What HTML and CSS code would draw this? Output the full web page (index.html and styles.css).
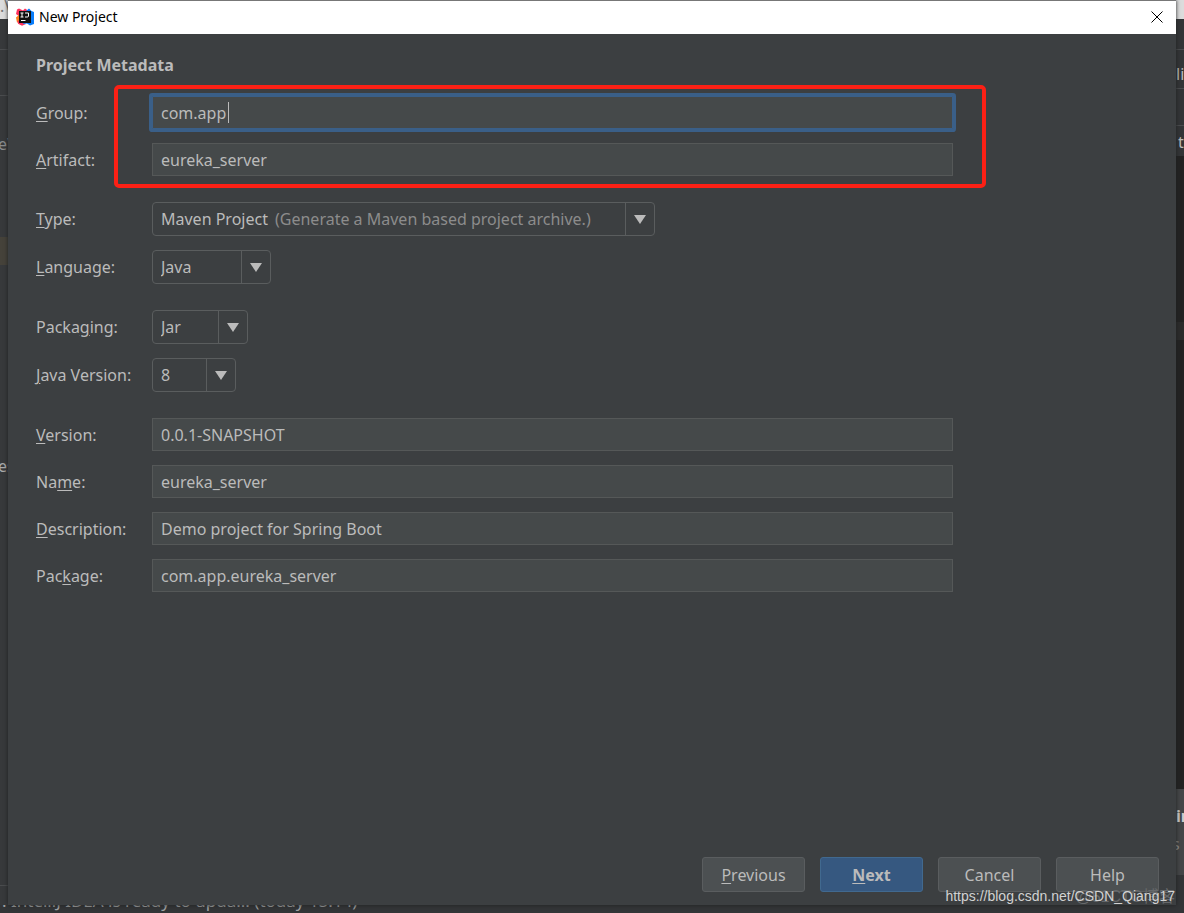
FILE: index.html
```html
<!DOCTYPE html>
<html lang="en">
<head>
<meta charset="utf-8">
<title>New Project</title>
<link rel="stylesheet" href="styles.css">
</head>
<body>
<div class="desktop">
  <aside class="edge edge-left" aria-hidden="true">
    <span class="scrap scrap-path">.\</span>
    <span class="rule rule-a"></span>
    <span class="rule rule-b"></span>
    <span class="scrap scrap-file">e\</span>
    <span class="highlight"></span>
    <span class="scrap scrap-es">es</span>
    <span class="rule rule-c"></span>
  </aside>

  <main class="dialog">
    <header class="titlebar">
      <svg class="logo" viewBox="0 0 18 18" aria-hidden="true">
        <path fill="#fe315d" d="M1 1.500 3 .5l4 2 2-2 3 2v3L4 9 0 6z"/>
        <path fill="#fc801d" d="M0 9.500 4 6l1 8-4 .5z"/>
        <path fill="#fe315d" d="M1.500 13 5 12l5 4-4 1.800-4-2z"/>
        <path fill="#087cfa" d="M10 3 13 .5 15.500 3 18 4v12l-4 1.500-3-2-4 .5z"/>
        <path fill="#111" d="M3 3h12v12H3z"/>
        <path fill="none" stroke="#fff" d="M4.500 5h3M6 5v4M4.500 9h3M9 5h3.500v3q0 1-1.200 1H9M5 12.500h4.500"/>
      </svg>
      <h1 class="title">New Project</h1>
      <button class="close" type="button" aria-label="Close">
        <svg viewBox="0 0 12 12" aria-hidden="true"><path d="M.5.5l11 11M11.500.5l-11 11"/></svg>
      </button>
    </header>

    <form class="content">
      <h2 class="heading">Project Metadata</h2>

      <div class="group">
        <label for="group"><u>G</u>roup:</label>
        <div class="focused"><input class="field" id="group" value="com.app"><span class="caret"></span></div>
        <label for="artifact"><u>A</u>rtifact:</label>
        <input class="field" id="artifact" value="eureka_server">
        <span class="marker"></span>
      </div>

      <div class="group">
        <label for="type"><u>T</u>ype:</label>
        <div class="combo combo-type">
          <select id="type"><option>Maven Project</option></select>
          <span class="hint">(Generate a Maven based project archive.)</span>
          <span class="arrow"></span>
        </div>
        <label for="language"><u>L</u>anguage:</label>
        <div class="combo combo-language">
          <select id="language"><option>Java</option></select>
          <span class="arrow"></span>
        </div>
      </div>

      <div class="group">
        <label for="packaging">Packa<u>g</u>ing:</label>
        <div class="combo combo-packaging">
          <select id="packaging"><option>Jar</option></select>
          <span class="arrow"></span>
        </div>
        <label for="java"><u>J</u>ava Version:</label>
        <div class="combo combo-java">
          <select id="java"><option>8</option></select>
          <span class="arrow"></span>
        </div>
      </div>

      <div class="group">
        <label for="version"><u>V</u>ersion:</label>
        <input class="field" id="version" value="0.0.1-SNAPSHOT">
        <label for="name">Na<u>m</u>e:</label>
        <input class="field" id="name" value="eureka_server">
        <label for="description"><u>D</u>escription:</label>
        <input class="field" id="description" value="Demo project for Spring Boot">
        <label for="package">Pac<u>k</u>age:</label>
        <input class="field" id="package" value="com.app.eureka_server">
      </div>
    </form>

    <footer class="actions">
      <button class="button" type="button"><u>P</u>revious</button>
      <button class="button button-primary" type="button"><u>N</u>ext</button>
      <button class="button" type="button">Cancel</button>
      <button class="button" type="button">Help</button>
    </footer>
  </main>

  <aside class="edge edge-right" aria-hidden="true">
    <span class="scrap scrap-li">li</span>
    <span class="rule rule-a"></span>
    <span class="rule rule-d"></span>
    <span class="rule rule-e"></span>
    <span class="scrap scrap-t">t</span>
    <span class="editor"></span>
    <span class="editor-line"></span>
    <span class="notice"></span>
    <span class="scrap scrap-in">in</span>
    <span class="scrap scrap-s">s</span>
  </aside>

  <div class="status">: IntelliJ IDEA is ready to upda... (today 15:14)</div>
  <span class="watermark watermark-site">@51CTO博客</span>
  <span class="watermark watermark-url">https://blog.csdn.net/CSDN_Qiang17</span>
</div>
</body>
</html>
```

FILE: styles.css
```css
* {
  box-sizing: border-box;
}

body {
  margin: 0;
  background: #333537;
  color: #bbbbbb;
  font: 16px/24px "Noto Sans", "Open Sans", sans-serif;
}

.desktop {
  position: relative;
  display: grid;
  grid-template: 1fr 8px / 8px 1fr 8px;
  height: 100vh;
  overflow: hidden;
}

/* Slivers of the window behind the dialog */
.edge {
  position: relative;
  overflow: hidden;
  background: linear-gradient(#dcdcdc 19px, #37393b 19px);
}

.edge-right {
  background: linear-gradient(#dcdcdc 19px, #333537 19px);
}

.scrap,
.rule,
.highlight,
.editor,
.editor-line,
.notice {
  position: absolute;
  left: 0;
}

.scrap {
  color: #8a8c8d;
  line-height: 20px;
}

.rule {
  width: 100%;
  height: 1px;
  background: #4a4c4e;
}

.rule-a { top: 49px; }
.rule-b { top: 95px; }
.rule-c { top: 885px; }
.rule-d { top: 88px; }
.rule-e { top: 125px; }
.scrap-path { top: -4px; color: #777777; }
.scrap-file { top: 134px; left: -2px; }
.scrap-es { top: 456px; left: -2px; color: #aaaaaa; }
.scrap-li { top: 64px; color: #bbbbbb; }
.scrap-t { top: 132px; left: 2px; color: #bbbbbb; }
.scrap-in { top: 806px; color: #cccccc; font-weight: 700; }
.scrap-s { top: 834px; left: -4px; }

.highlight {
  top: 237px;
  width: 100%;
  height: 28px;
  background: #45423a;
}

.editor {
  top: 156px;
  width: 100%;
  height: 633px;
  background: #232323;
}

.editor-line {
  top: 322px;
  width: 100%;
  height: 18px;
  background: #2b2b2b;
}

.notice {
  top: 789px;
  width: 100%;
  height: 86px;
  background: #444648;
}

.status {
  display: flex;
  grid-column: 1 / -1;
  align-items: flex-end;
  height: 8px;
  padding-left: 2px;
  overflow: hidden;
  background: #333537;
  color: #a0a2a3;
  font-size: 17px;
  line-height: 24px;
  white-space: nowrap;
}

/* Dialog */
.dialog {
  z-index: 1;
  display: flex;
  flex-direction: column;
  min-width: 0;
  border-top: 1px solid #777777;
  background: #3c3f41;
  box-shadow: 0 0 4px #1f2021;
}

.titlebar {
  display: flex;
  align-items: center;
  gap: 5px;
  height: 33px;
  padding: 0 13px 1px 8px;
  background: #ffffff;
}

.logo {
  width: 18px;
  height: 18px;
}

.title {
  flex: 1;
  margin: 0;
  color: #000000;
  font-size: 14px;
  font-weight: 400;
}

.close {
  display: flex;
  padding: 0;
  border: 0;
  background: none;
}

.close svg {
  width: 12px;
  height: 12px;
  fill: none;
  stroke: #000000;
}

.content {
  display: flex;
  flex: 1;
  flex-direction: column;
  gap: 26px;
  padding: 19px 223px 0 28px;
}

.heading {
  margin: 0 0 -7px;
  font-size: 16px;
  font-weight: 700;
}

.group {
  position: relative;
  display: grid;
  grid-template-columns: 116px 1fr;
  gap: 14px 0;
  align-items: center;
}

u {
  text-decoration-thickness: 1px;
  text-underline-offset: 2px;
}

.field {
  width: 100%;
  height: 33px;
  padding: 0 8px;
  border: 1px solid #555858;
  border-radius: 0;
  background: #45494a;
  color: #bbbbbb;
  font: inherit;
  outline: 0;
}

.focused {
  position: relative;
  display: flex;
}

.focused .field {
  border-color: #3a5f88;
  border-radius: 1px;
  box-shadow: 0 0 0 3px #3a5f88;
}

.caret {
  position: absolute;
  top: 6px;
  left: 76px;
  width: 1px;
  height: 21px;
  background: #bbbbbb;
}

.marker {
  position: absolute;
  inset: -11px -33px -12px 78px;
  border: 4px solid #fc2015;
  border-radius: 5px;
  pointer-events: none;
}

.combo {
  display: grid;
  grid-template-columns: 1fr 29px;
  align-items: center;
  height: 34px;
  border: 1px solid #5a5d5e;
  border-radius: 4px;
}

.combo-type { width: 503px; }
.combo-language { width: 119px; }
.combo-packaging { width: 96px; }
.combo-java { width: 84px; }

.combo select {
  grid-area: 1 / 1 / 2 / 3;
  width: 100%;
  height: 32px;
  padding: 0 8px;
  border: 0;
  appearance: none;
  background: none;
  color: inherit;
  font: inherit;
}

.hint {
  grid-area: 1 / 1;
  padding-left: 122px;
  color: #8c8c8c;
  pointer-events: none;
  white-space: nowrap;
}

.arrow {
  grid-area: 1 / 2;
  display: grid;
  place-items: center;
  height: 32px;
  border-left: 1px solid #5a5d5e;
  pointer-events: none;
}

.arrow::before {
  content: "";
  border: solid transparent;
  border-width: 9px 6px 0;
  border-top-color: #bbbbbb;
}

.actions {
  display: flex;
  justify-content: flex-end;
  gap: 15px;
  padding: 0 17px 13px;
}

.button {
  width: 103px;
  height: 35px;
  padding: 0;
  border: 1px solid #5a5d5f;
  border-radius: 3px;
  background: #4c5052;
  color: #bbbbbb;
  font: inherit;
}

.button-primary {
  border-color: #41698f;
  background: #365880;
  font-weight: 700;
}

.watermark {
  position: absolute;
  right: 9px;
  z-index: 2;
  font-family: "Liberation Sans", "Noto Sans CJK SC", sans-serif;
  white-space: nowrap;
  pointer-events: none;
}

.watermark-url {
  bottom: 5px;
  color: #d2d2d2;
  font-size: 14px;
}

.watermark-site {
  bottom: 4px;
  color: #67696b;
  font-size: 16px;
}
```
